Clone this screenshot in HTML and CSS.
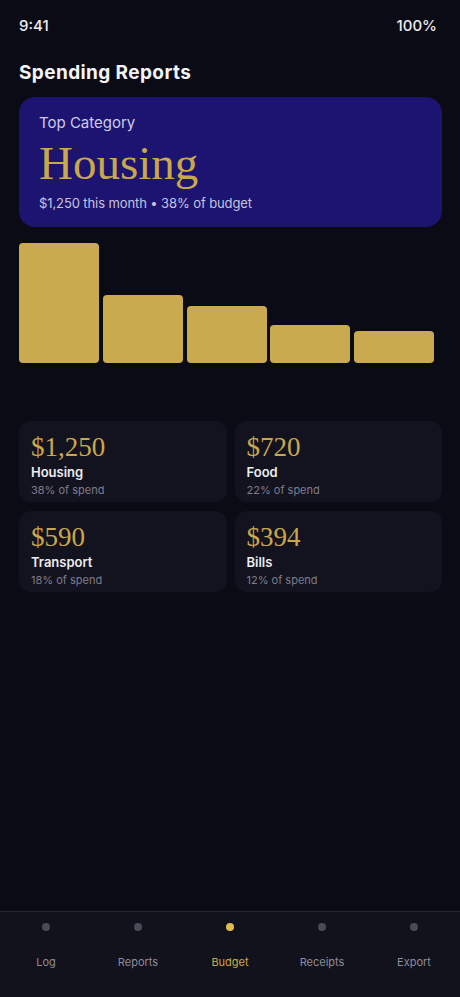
FILE: index.html
```html
<!DOCTYPE html>
<html>
<head>
<meta charset="utf-8">
<link rel="stylesheet" href="styles.css">
</head>
<body>
<div class="screen">
  <div class="status">
    <span>9:41</span>
    <span>100%</span>
  </div>
  <h1 class="title">Spending Reports</h1>
  <section class="hero">
    <div class="hero-label">Top Category</div>
    <div class="hero-name">Housing</div>
    <div class="hero-sub">$1,250 this month • 38% of budget</div>
  </section>
  <div class="chart">
    <div class="bar" style="height:120px"></div>
    <div class="bar" style="height:68px"></div>
    <div class="bar" style="height:57px"></div>
    <div class="bar" style="height:38px"></div>
    <div class="bar" style="height:32px"></div>
  </div>
  <div class="stats">
    <div class="stat">
      <div class="stat-value">$1,250</div>
      <div class="stat-name">Housing</div>
      <div class="stat-sub">38% of spend</div>
    </div>
    <div class="stat">
      <div class="stat-value">$720</div>
      <div class="stat-name">Food</div>
      <div class="stat-sub">22% of spend</div>
    </div>
    <div class="stat">
      <div class="stat-value">$590</div>
      <div class="stat-name">Transport</div>
      <div class="stat-sub">18% of spend</div>
    </div>
    <div class="stat">
      <div class="stat-value">$394</div>
      <div class="stat-name">Bills</div>
      <div class="stat-sub">12% of spend</div>
    </div>
  </div>
  <nav class="nav">
    <div class="nav-item"><span class="dot"></span><span class="nav-label">Log</span></div>
    <div class="nav-item"><span class="dot"></span><span class="nav-label">Reports</span></div>
    <div class="nav-item active"><span class="dot"></span><span class="nav-label">Budget</span></div>
    <div class="nav-item"><span class="dot"></span><span class="nav-label">Receipts</span></div>
    <div class="nav-item"><span class="dot"></span><span class="nav-label">Export</span></div>
  </nav>
</div>
</body>
</html>
```
FILE: styles.css
```css
* { box-sizing: border-box; }
html, body { margin: 0; padding: 0; background: #0b0b16; }
body {
  font-family: "Inter", "Noto Sans", sans-serif;
  color: #f2f2f5;
}
.screen {
  width: 460px;
  height: 997px;
  position: relative;
  display: flex;
  flex-direction: column;
  padding: 0 18px 0 19px;
  overflow: hidden;
}
.status {
  height: 52px;
  display: flex;
  justify-content: space-between;
  align-items: center;
  padding-bottom: 2px;
  font-size: 15px;
  font-weight: 500;
  color: #ececf0;
}
.status span:last-child { margin-right: 5px; }
.title {
  margin: 9px 0 12px;
  font-size: 19px;
  line-height: 24px;
  font-weight: 700;
  letter-spacing: 0.4px;
  color: #f4f4f7;
}
.hero {
  height: 130px;
  background: #1c1470;
  border-radius: 16px;
  padding: 16px 20px;
  display: flex;
  flex-direction: column;
}
.hero-label {
  font-size: 15px;
  line-height: 20px;
  color: #cfcbe8;
  font-weight: 400;
}
.hero-name {
  margin-top: 4px;
  font-family: "Liberation Serif", "DejaVu Serif", serif;
  font-size: 47px;
  line-height: 52px;
  color: #c9a84c;
}
.hero-sub {
  margin-top: 6px;
  font-size: 13px;
  line-height: 16px;
  color: #c6c3de;
  letter-spacing: -0.1px;
}
.chart {
  margin-top: 16px;
  height: 120px;
  display: flex;
  align-items: flex-end;
  gap: 3.75px;
}
.bar {
  width: 80px;
  background: #c9aa4f;
  border-radius: 4px;
}
.stats {
  margin-top: 58px;
  display: grid;
  grid-template-columns: 1fr 1fr;
  column-gap: 8px;
  row-gap: 9px;
}
.stat {
  height: 81px;
  background: #13131f;
  border-radius: 12px;
  padding: 11px 12px;
  display: flex;
  flex-direction: column;
}
.stat-value {
  font-family: "Liberation Serif", "DejaVu Serif", serif;
  font-size: 27px;
  line-height: 30px;
  color: #c9a84c;
}
.stat-name {
  margin-top: 1px;
  font-size: 13px;
  line-height: 18px;
  font-weight: 600;
  color: #ececf0;
}
.stat-sub {
  margin-top: 1px;
  font-size: 11px;
  line-height: 16px;
  color: #7d7d8c;
}
.nav {
  position: absolute;
  left: 0;
  right: 0;
  bottom: 0;
  height: 86px;
  background: #12121d;
  border-top: 1px solid #262633;
  display: grid;
  grid-template-columns: repeat(5, 1fr);
}
.nav-item {
  display: flex;
  flex-direction: column;
  align-items: center;
  padding-top: 11px;
}
.dot {
  width: 8px;
  height: 8px;
  border-radius: 50%;
  background: #4a4a57;
}
.nav-label {
  margin-top: 23px;
  font-size: 11px;
  line-height: 16px;
  color: #8c8c9a;
}
.nav-item.active .dot { background: #e0bb4e; }
.nav-item.active .nav-label { color: #c9a84c; }
```
